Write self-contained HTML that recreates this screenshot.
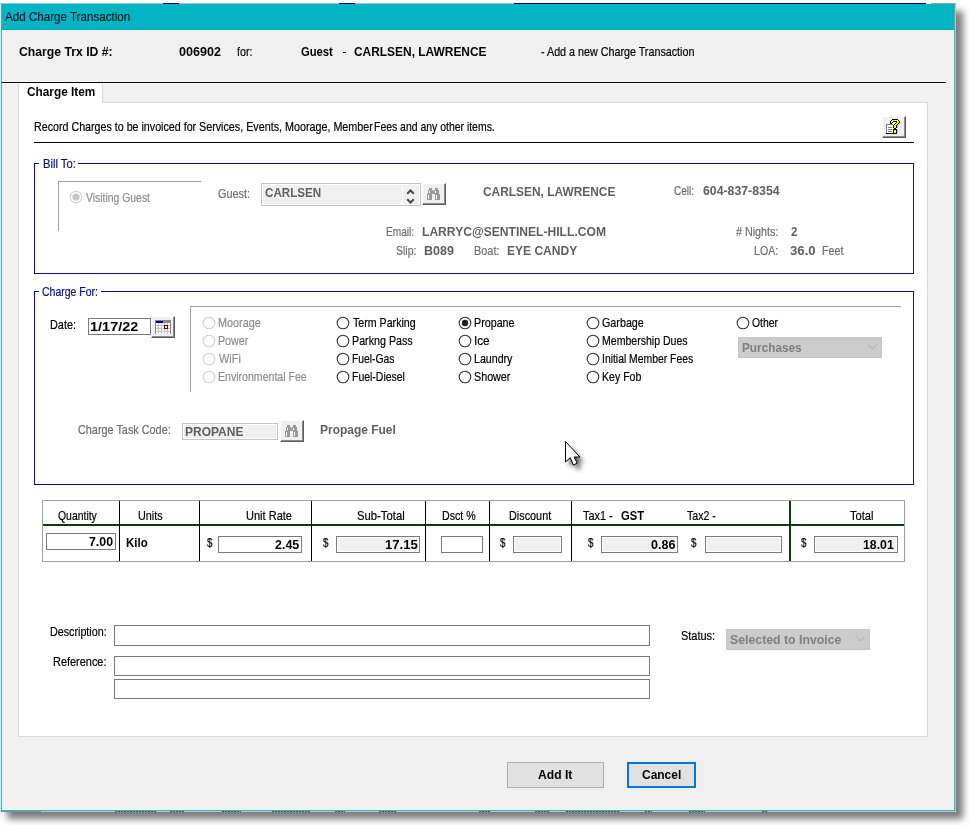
<!DOCTYPE html><html><head><meta charset="utf-8"><style>
html,body{margin:0;padding:0;width:969px;height:825px;overflow:hidden;background:#fff}
body>div,body>svg{position:absolute}
.t{font-family:"Liberation Sans",sans-serif;font-size:13px;line-height:normal;white-space:pre;transform-origin:0 0}
.n{-webkit-text-stroke:0.2px currentColor}
</style></head><body>
<div style="left:0;top:4px;width:956px;height:808px;box-shadow:7px 7px 7px rgba(0,0,0,0.52)"></div>
<div style="left:0px;top:3px;width:956px;height:1px;background:#8ccdd2"></div>
<div style="left:163px;top:3px;width:16px;height:1px;background:#000070"></div>
<div style="left:339px;top:3px;width:16px;height:1px;background:#000070"></div>
<div style="left:514px;top:3px;width:412px;height:1px;background:#000070"></div>
<div style="left:926px;top:3px;width:5px;height:1px;background:#fff"></div>
<div style="left:931px;top:3px;width:25px;height:1px;background:#a0a0a0"></div>
<div style="left:0px;top:4px;width:956px;height:808px;background:#9cd6da"></div>
<div style="left:0px;top:4px;width:1px;height:807px;background:#c4f6f7"></div>
<div style="left:1px;top:4px;width:954px;height:807px;background:#5fa2a6"></div>
<div style="left:2px;top:4px;width:952px;height:806px;background:#dffbfb"></div>
<div style="left:2px;top:4px;width:952px;height:26px;background:#03b4c4"></div>
<div style="left:2px;top:29px;width:952px;height:1px;background:#0aa4b2"></div>
<div style="left:3px;top:31px;width:950px;height:778px;background:#f0f0f0"></div>
<div style="left:343px;top:52px;width:3px;height:1px;background:#000"></div>
<div style="left:1px;top:811px;width:40px;height:1px;background:#5a9ea2"></div>
<div style="left:115px;top:811px;width:42px;height:1px;background:repeating-linear-gradient(90deg,#1e6a6e 0 2px,#7fbcc0 2px 3px)"></div>
<div style="left:170px;top:811px;width:14px;height:1px;background:repeating-linear-gradient(90deg,#1e6a6e 0 2px,#7fbcc0 2px 3px)"></div>
<div style="left:222px;top:811px;width:19px;height:1px;background:repeating-linear-gradient(90deg,#1e6a6e 0 2px,#7fbcc0 2px 3px)"></div>
<div style="left:272px;top:811px;width:38px;height:1px;background:repeating-linear-gradient(90deg,#1e6a6e 0 2px,#7fbcc0 2px 3px)"></div>
<div style="left:335px;top:811px;width:10px;height:1px;background:repeating-linear-gradient(90deg,#1e6a6e 0 2px,#7fbcc0 2px 3px)"></div>
<div style="left:379px;top:811px;width:18px;height:1px;background:repeating-linear-gradient(90deg,#1e6a6e 0 2px,#7fbcc0 2px 3px)"></div>
<div style="left:479px;top:811px;width:12px;height:1px;background:repeating-linear-gradient(90deg,#1e6a6e 0 2px,#7fbcc0 2px 3px)"></div>
<div style="left:535px;top:811px;width:15px;height:1px;background:repeating-linear-gradient(90deg,#1e6a6e 0 2px,#7fbcc0 2px 3px)"></div>
<div style="left:566px;top:811px;width:54px;height:1px;background:repeating-linear-gradient(90deg,#1e6a6e 0 2px,#7fbcc0 2px 3px)"></div>
<div style="left:645px;top:811px;width:7px;height:1px;background:repeating-linear-gradient(90deg,#1e6a6e 0 2px,#7fbcc0 2px 3px)"></div>
<div style="left:689px;top:811px;width:16px;height:1px;background:repeating-linear-gradient(90deg,#1e6a6e 0 2px,#7fbcc0 2px 3px)"></div>
<div style="left:762px;top:811px;width:6px;height:1px;background:repeating-linear-gradient(90deg,#1e6a6e 0 2px,#7fbcc0 2px 3px)"></div>
<div style="left:3px;top:81px;width:943px;height:1px;background:#ffffff"></div>
<div style="left:2px;top:82px;width:944px;height:1px;background:#000"></div>
<div style="left:3px;top:83px;width:943px;height:1px;background:#ffffff"></div>
<div style="left:18px;top:102px;width:910px;height:635px;background:#fff;border:1px solid #d9d9d9;box-sizing:border-box"></div>
<div style="left:18px;top:84px;width:85px;height:19px;background:#fff;border:1px solid #d9d9d9;border-bottom:none;border-top:none;box-sizing:border-box"></div>
<div style="left:34px;top:142px;width:880px;height:1px;background:#000"></div>
<div style="left:882px;top:116px;width:24px;height:22px;background:#f0f0f0;border-top:1px solid #fff;border-left:1px solid #fff;border-right:1px solid #5a5a5a;border-bottom:1px solid #5a5a5a;box-shadow:inset -1px -1px #8c8c8c;box-sizing:border-box"></div>
<svg style="left:886px;top:124px" width="7" height="10" viewBox="0 0 7 10" shape-rendering="crispEdges"><rect x="0" y="0" width="7" height="1" fill="#808080"/><rect x="0" y="1" width="1" height="1" fill="#808080"/><rect x="1" y="1" width="6" height="1" fill="#fff"/><rect x="0" y="2" width="1" height="1" fill="#808080"/><rect x="1" y="2" width="6" height="1" fill="#fff"/><rect x="0" y="3" width="1" height="1" fill="#808080"/><rect x="1" y="3" width="1" height="1" fill="#fff"/><rect x="2" y="3" width="4" height="1" fill="#808080"/><rect x="6" y="3" width="1" height="1" fill="#fff"/><rect x="0" y="4" width="1" height="1" fill="#808080"/><rect x="1" y="4" width="6" height="1" fill="#fff"/><rect x="0" y="5" width="1" height="1" fill="#808080"/><rect x="1" y="5" width="1" height="1" fill="#fff"/><rect x="2" y="5" width="4" height="1" fill="#808080"/><rect x="6" y="5" width="1" height="1" fill="#fff"/><rect x="0" y="6" width="1" height="1" fill="#808080"/><rect x="1" y="6" width="6" height="1" fill="#fff"/><rect x="0" y="7" width="1" height="1" fill="#808080"/><rect x="1" y="7" width="1" height="1" fill="#fff"/><rect x="2" y="7" width="4" height="1" fill="#808080"/><rect x="6" y="7" width="1" height="1" fill="#fff"/><rect x="0" y="8" width="1" height="1" fill="#808080"/><rect x="1" y="8" width="6" height="1" fill="#fff"/><rect x="0" y="9" width="7" height="1" fill="#000"/></svg>
<svg style="left:890px;top:119px" width="11" height="15" viewBox="0 0 11 15" shape-rendering="crispEdges"><rect x="2" y="0" width="6" height="1" fill="#000"/><rect x="1" y="1" width="1" height="1" fill="#000"/><rect x="2" y="1" width="6" height="1" fill="#ffff00"/><rect x="8" y="1" width="1" height="1" fill="#000"/><rect x="0" y="2" width="1" height="1" fill="#000"/><rect x="1" y="2" width="2" height="1" fill="#ffff00"/><rect x="3" y="2" width="4" height="1" fill="#000"/><rect x="7" y="2" width="2" height="1" fill="#ffff00"/><rect x="9" y="2" width="1" height="1" fill="#000"/><rect x="0" y="3" width="1" height="1" fill="#000"/><rect x="1" y="3" width="1" height="1" fill="#ffff00"/><rect x="2" y="3" width="1" height="1" fill="#000"/><rect x="6" y="3" width="1" height="1" fill="#000"/><rect x="7" y="3" width="2" height="1" fill="#ffff00"/><rect x="9" y="3" width="1" height="1" fill="#000"/><rect x="10" y="3" width="1" height="1" fill="#b8b8b8"/><rect x="0" y="4" width="2" height="1" fill="#000"/><rect x="5" y="4" width="1" height="1" fill="#000"/><rect x="6" y="4" width="2" height="1" fill="#ffff00"/><rect x="8" y="4" width="1" height="1" fill="#000"/><rect x="9" y="4" width="1" height="1" fill="#b8b8b8"/><rect x="4" y="5" width="1" height="1" fill="#000"/><rect x="5" y="5" width="2" height="1" fill="#ffff00"/><rect x="7" y="5" width="1" height="1" fill="#000"/><rect x="8" y="5" width="1" height="1" fill="#b8b8b8"/><rect x="3" y="6" width="1" height="1" fill="#000"/><rect x="4" y="6" width="2" height="1" fill="#ffff00"/><rect x="6" y="6" width="1" height="1" fill="#000"/><rect x="7" y="6" width="1" height="1" fill="#b8b8b8"/><rect x="3" y="7" width="1" height="1" fill="#000"/><rect x="4" y="7" width="2" height="1" fill="#ffff00"/><rect x="6" y="7" width="1" height="1" fill="#000"/><rect x="7" y="7" width="1" height="1" fill="#b8b8b8"/><rect x="3" y="8" width="1" height="1" fill="#000"/><rect x="4" y="8" width="2" height="1" fill="#ffff00"/><rect x="6" y="8" width="1" height="1" fill="#000"/><rect x="7" y="8" width="1" height="1" fill="#b8b8b8"/><rect x="4" y="9" width="2" height="1" fill="#000"/><rect x="3" y="10" width="4" height="1" fill="#000"/><rect x="3" y="11" width="1" height="1" fill="#000"/><rect x="4" y="11" width="2" height="1" fill="#ffff00"/><rect x="6" y="11" width="1" height="1" fill="#000"/><rect x="7" y="11" width="1" height="1" fill="#a8b8d0"/><rect x="3" y="12" width="1" height="1" fill="#000"/><rect x="4" y="12" width="2" height="1" fill="#ffff00"/><rect x="6" y="12" width="1" height="1" fill="#000"/><rect x="7" y="12" width="1" height="1" fill="#a8b8d0"/><rect x="3" y="13" width="1" height="1" fill="#000"/><rect x="4" y="13" width="2" height="1" fill="#ffff00"/><rect x="6" y="13" width="1" height="1" fill="#000"/><rect x="7" y="13" width="1" height="1" fill="#a8b8d0"/><rect x="3" y="14" width="4" height="1" fill="#000"/></svg>
<div style="left:34px;top:163px;width:880px;height:1px;background:#12127f"></div>
<div style="left:39px;top:162px;width:39px;height:3px;background:#fff"></div>
<div style="left:34px;top:163px;width:1px;height:111px;background:#12127f"></div>
<div style="left:913px;top:163px;width:1px;height:111px;background:#12127f"></div>
<div style="left:34px;top:273px;width:880px;height:1px;background:#12127f"></div>
<div style="left:34px;top:291px;width:880px;height:1px;background:#12127f"></div>
<div style="left:39px;top:290px;width:62px;height:3px;background:#fff"></div>
<div style="left:34px;top:291px;width:1px;height:194px;background:#12127f"></div>
<div style="left:913px;top:291px;width:1px;height:194px;background:#12127f"></div>
<div style="left:34px;top:484px;width:880px;height:1px;background:#12127f"></div>
<div style="left:58px;top:181px;width:143px;height:1px;background:#a0a0a0"></div>
<div style="left:58px;top:181px;width:1px;height:50px;background:#a0a0a0"></div>
<div style="left:190px;top:306px;width:711px;height:1px;background:#a0a0a0"></div>
<div style="left:190px;top:306px;width:1px;height:86px;background:#a0a0a0"></div>
<div style="left:261px;top:183px;width:160px;height:23px;background:#f0f0f0;box-shadow:inset 1px 1px #fff,inset -1px -1px #fff;border:1px solid #c4c4c4;box-sizing:border-box"></div>
<div style="left:402px;top:184px;width:1px;height:21px;background:#fff"></div>
<svg style="left:405px;top:187px" width="11" height="18" viewBox="0 0 11 18"><path d="M2.2 6.8 L5.5 3.5 L8.8 6.8" fill="none" stroke="#4a4a4a" stroke-width="2"/><path d="M2.2 12.2 L5.5 15.5 L8.8 12.2" fill="none" stroke="#4a4a4a" stroke-width="2"/></svg>
<div style="left:422px;top:183px;width:24px;height:22px;background:#f0f0f0;border-top:1px solid #fff;border-left:1px solid #fff;border-right:1px solid #5a5a5a;border-bottom:1px solid #5a5a5a;box-shadow:inset -1px -1px #8c8c8c;box-sizing:border-box"></div>
<svg style="left:427px;top:188px" width="13" height="12" viewBox="0 0 13 12" shape-rendering="crispEdges"><rect x="2" y="0" width="3" height="1" fill="#999999"/><rect x="8" y="0" width="3" height="1" fill="#999999"/><rect x="2" y="1" width="3" height="1" fill="#999999"/><rect x="8" y="1" width="3" height="1" fill="#999999"/><rect x="1" y="2" width="5" height="1" fill="#999999"/><rect x="7" y="2" width="5" height="1" fill="#999999"/><rect x="1" y="3" width="1" height="1" fill="#999999"/><rect x="2" y="3" width="1" height="1" fill="#ffffff"/><rect x="3" y="3" width="5" height="1" fill="#999999"/><rect x="8" y="3" width="1" height="1" fill="#ffffff"/><rect x="9" y="3" width="3" height="1" fill="#999999"/><rect x="1" y="4" width="1" height="1" fill="#999999"/><rect x="2" y="4" width="1" height="1" fill="#ffffff"/><rect x="3" y="4" width="5" height="1" fill="#999999"/><rect x="8" y="4" width="1" height="1" fill="#ffffff"/><rect x="9" y="4" width="3" height="1" fill="#999999"/><rect x="1" y="5" width="11" height="1" fill="#999999"/><rect x="0" y="6" width="5" height="1" fill="#999999"/><rect x="8" y="6" width="5" height="1" fill="#999999"/><rect x="0" y="7" width="1" height="1" fill="#999999"/><rect x="1" y="7" width="1" height="1" fill="#ffffff"/><rect x="2" y="7" width="3" height="1" fill="#999999"/><rect x="8" y="7" width="1" height="1" fill="#999999"/><rect x="9" y="7" width="1" height="1" fill="#ffffff"/><rect x="10" y="7" width="3" height="1" fill="#999999"/><rect x="0" y="8" width="1" height="1" fill="#999999"/><rect x="1" y="8" width="1" height="1" fill="#ffffff"/><rect x="2" y="8" width="3" height="1" fill="#999999"/><rect x="8" y="8" width="1" height="1" fill="#999999"/><rect x="9" y="8" width="1" height="1" fill="#ffffff"/><rect x="10" y="8" width="3" height="1" fill="#999999"/><rect x="0" y="9" width="1" height="1" fill="#999999"/><rect x="1" y="9" width="1" height="1" fill="#ffffff"/><rect x="2" y="9" width="3" height="1" fill="#999999"/><rect x="8" y="9" width="1" height="1" fill="#999999"/><rect x="9" y="9" width="1" height="1" fill="#ffffff"/><rect x="10" y="9" width="3" height="1" fill="#999999"/><rect x="0" y="10" width="1" height="1" fill="#999999"/><rect x="1" y="10" width="1" height="1" fill="#ffffff"/><rect x="2" y="10" width="3" height="1" fill="#999999"/><rect x="8" y="10" width="1" height="1" fill="#999999"/><rect x="9" y="10" width="1" height="1" fill="#ffffff"/><rect x="10" y="10" width="3" height="1" fill="#999999"/><rect x="0" y="11" width="5" height="1" fill="#999999"/><rect x="8" y="11" width="5" height="1" fill="#999999"/></svg>
<div style="left:88px;top:318px;width:63px;height:17px;background:#fff;border:1px solid #7a7a7a;box-sizing:border-box"></div>
<div style="left:151px;top:316px;width:24px;height:22px;background:#f0f0f0;border-top:1px solid #fff;border-left:1px solid #fff;border-right:1px solid #5a5a5a;border-bottom:1px solid #5a5a5a;box-shadow:inset -1px -1px #8c8c8c;box-sizing:border-box"></div>
<svg style="left:155px;top:320px" width="16" height="14" viewBox="0 0 16 14" shape-rendering="crispEdges"><rect x="0" y="0" width="16" height="1" fill="#8a8a8a"/><rect x="0" y="1" width="1" height="1" fill="#8a8a8a"/><rect x="1" y="1" width="7" height="1" fill="#000070"/><rect x="8" y="1" width="7" height="1" fill="#8a8a8a"/><rect x="15" y="1" width="1" height="1" fill="#8a8a8a"/><rect x="0" y="2" width="1" height="1" fill="#8a8a8a"/><rect x="1" y="2" width="7" height="1" fill="#000070"/><rect x="8" y="2" width="7" height="1" fill="#8a8a8a"/><rect x="15" y="2" width="1" height="1" fill="#8a8a8a"/><rect x="0" y="3" width="1" height="1" fill="#8a8a8a"/><rect x="1" y="3" width="2" height="1" fill="#ffffff"/><rect x="3" y="3" width="1" height="1" fill="#c4c4c4"/><rect x="4" y="3" width="2" height="1" fill="#ffffff"/><rect x="6" y="3" width="1" height="1" fill="#c4c4c4"/><rect x="7" y="3" width="2" height="1" fill="#ffffff"/><rect x="9" y="3" width="1" height="1" fill="#c4c4c4"/><rect x="10" y="3" width="2" height="1" fill="#ffffff"/><rect x="12" y="3" width="1" height="1" fill="#c4c4c4"/><rect x="13" y="3" width="2" height="1" fill="#ffffff"/><rect x="15" y="3" width="1" height="1" fill="#8a8a8a"/><rect x="0" y="4" width="1" height="1" fill="#8a8a8a"/><rect x="1" y="4" width="2" height="1" fill="#ffffff"/><rect x="3" y="4" width="1" height="1" fill="#c4c4c4"/><rect x="4" y="4" width="2" height="1" fill="#ffffff"/><rect x="6" y="4" width="1" height="1" fill="#c4c4c4"/><rect x="7" y="4" width="2" height="1" fill="#ffffff"/><rect x="9" y="4" width="1" height="1" fill="#c4c4c4"/><rect x="10" y="4" width="2" height="1" fill="#ffffff"/><rect x="12" y="4" width="1" height="1" fill="#c4c4c4"/><rect x="13" y="4" width="2" height="1" fill="#ffffff"/><rect x="15" y="4" width="1" height="1" fill="#8a8a8a"/><rect x="0" y="5" width="1" height="1" fill="#8a8a8a"/><rect x="1" y="5" width="8" height="1" fill="#c4c4c4"/><rect x="9" y="5" width="4" height="1" fill="#700000"/><rect x="13" y="5" width="2" height="1" fill="#c4c4c4"/><rect x="15" y="5" width="1" height="1" fill="#8a8a8a"/><rect x="0" y="6" width="1" height="1" fill="#8a8a8a"/><rect x="1" y="6" width="2" height="1" fill="#ffffff"/><rect x="3" y="6" width="1" height="1" fill="#c4c4c4"/><rect x="4" y="6" width="2" height="1" fill="#ffffff"/><rect x="6" y="6" width="1" height="1" fill="#c4c4c4"/><rect x="7" y="6" width="2" height="1" fill="#ffffff"/><rect x="9" y="6" width="1" height="1" fill="#700000"/><rect x="10" y="6" width="2" height="1" fill="#ffffff"/><rect x="12" y="6" width="1" height="1" fill="#700000"/><rect x="13" y="6" width="2" height="1" fill="#ffffff"/><rect x="15" y="6" width="1" height="1" fill="#8a8a8a"/><rect x="0" y="7" width="1" height="1" fill="#8a8a8a"/><rect x="1" y="7" width="2" height="1" fill="#ffffff"/><rect x="3" y="7" width="1" height="1" fill="#c4c4c4"/><rect x="4" y="7" width="2" height="1" fill="#ffffff"/><rect x="6" y="7" width="1" height="1" fill="#c4c4c4"/><rect x="7" y="7" width="2" height="1" fill="#ffffff"/><rect x="9" y="7" width="1" height="1" fill="#700000"/><rect x="10" y="7" width="2" height="1" fill="#ffffff"/><rect x="12" y="7" width="1" height="1" fill="#700000"/><rect x="13" y="7" width="2" height="1" fill="#ffffff"/><rect x="15" y="7" width="1" height="1" fill="#8a8a8a"/><rect x="0" y="8" width="1" height="1" fill="#8a8a8a"/><rect x="1" y="8" width="8" height="1" fill="#c4c4c4"/><rect x="9" y="8" width="4" height="1" fill="#700000"/><rect x="13" y="8" width="2" height="1" fill="#c4c4c4"/><rect x="15" y="8" width="1" height="1" fill="#8a8a8a"/><rect x="0" y="9" width="1" height="1" fill="#8a8a8a"/><rect x="1" y="9" width="2" height="1" fill="#ffffff"/><rect x="3" y="9" width="1" height="1" fill="#c4c4c4"/><rect x="4" y="9" width="2" height="1" fill="#ffffff"/><rect x="6" y="9" width="1" height="1" fill="#c4c4c4"/><rect x="7" y="9" width="2" height="1" fill="#ffffff"/><rect x="9" y="9" width="1" height="1" fill="#c4c4c4"/><rect x="10" y="9" width="2" height="1" fill="#ffffff"/><rect x="12" y="9" width="1" height="1" fill="#c4c4c4"/><rect x="13" y="9" width="2" height="1" fill="#ffffff"/><rect x="15" y="9" width="1" height="1" fill="#8a8a8a"/><rect x="0" y="10" width="1" height="1" fill="#8a8a8a"/><rect x="1" y="10" width="2" height="1" fill="#ffffff"/><rect x="3" y="10" width="1" height="1" fill="#c4c4c4"/><rect x="4" y="10" width="2" height="1" fill="#ffffff"/><rect x="6" y="10" width="1" height="1" fill="#c4c4c4"/><rect x="7" y="10" width="2" height="1" fill="#ffffff"/><rect x="9" y="10" width="1" height="1" fill="#c4c4c4"/><rect x="10" y="10" width="2" height="1" fill="#ffffff"/><rect x="12" y="10" width="1" height="1" fill="#c4c4c4"/><rect x="13" y="10" width="2" height="1" fill="#ffffff"/><rect x="15" y="10" width="1" height="1" fill="#8a8a8a"/><rect x="0" y="11" width="1" height="1" fill="#8a8a8a"/><rect x="1" y="11" width="14" height="1" fill="#c4c4c4"/><rect x="15" y="11" width="1" height="1" fill="#8a8a8a"/><rect x="0" y="12" width="1" height="1" fill="#8a8a8a"/><rect x="1" y="12" width="2" height="1" fill="#ffffff"/><rect x="3" y="12" width="1" height="1" fill="#c4c4c4"/><rect x="4" y="12" width="2" height="1" fill="#ffffff"/><rect x="6" y="12" width="1" height="1" fill="#c4c4c4"/><rect x="7" y="12" width="2" height="1" fill="#ffffff"/><rect x="9" y="12" width="1" height="1" fill="#c4c4c4"/><rect x="10" y="12" width="2" height="1" fill="#ffffff"/><rect x="12" y="12" width="1" height="1" fill="#c4c4c4"/><rect x="13" y="12" width="2" height="1" fill="#ffffff"/><rect x="15" y="12" width="1" height="1" fill="#8a8a8a"/><rect x="0" y="13" width="1" height="1" fill="#8a8a8a"/><rect x="1" y="13" width="2" height="1" fill="#ffffff"/><rect x="3" y="13" width="1" height="1" fill="#c4c4c4"/><rect x="4" y="13" width="2" height="1" fill="#ffffff"/><rect x="6" y="13" width="1" height="1" fill="#c4c4c4"/><rect x="7" y="13" width="2" height="1" fill="#ffffff"/><rect x="9" y="13" width="1" height="1" fill="#c4c4c4"/><rect x="10" y="13" width="2" height="1" fill="#ffffff"/><rect x="12" y="13" width="1" height="1" fill="#c4c4c4"/><rect x="13" y="13" width="2" height="1" fill="#ffffff"/><rect x="15" y="13" width="1" height="1" fill="#8a8a8a"/></svg>
<svg style="left:69.3px;top:190.1px" width="14" height="14" viewBox="0 0 14 14"><circle cx="7" cy="7" r="5.8" fill="#fff" stroke="#cfcfcf" stroke-width="1.1"/><circle cx="7" cy="7" r="3.6" fill="#c8c8c8"/></svg>
<svg style="left:201.5px;top:315.5px" width="14" height="14" viewBox="0 0 14 14"><circle cx="7" cy="7" r="5.8" fill="#fff" stroke="#cfcfcf" stroke-width="1.1"/></svg>
<svg style="left:335.5px;top:315.5px" width="14" height="14" viewBox="0 0 14 14"><circle cx="7" cy="7" r="5.8" fill="#fff" stroke="#333" stroke-width="1.1"/></svg>
<svg style="left:457.5px;top:315.5px" width="14" height="14" viewBox="0 0 14 14"><circle cx="7" cy="7" r="5.8" fill="#fff" stroke="#333" stroke-width="1.1"/><circle cx="7" cy="7" r="3.2" fill="#222"/></svg>
<svg style="left:585.5px;top:315.5px" width="14" height="14" viewBox="0 0 14 14"><circle cx="7" cy="7" r="5.8" fill="#fff" stroke="#333" stroke-width="1.1"/></svg>
<svg style="left:201.5px;top:333.5px" width="14" height="14" viewBox="0 0 14 14"><circle cx="7" cy="7" r="5.8" fill="#fff" stroke="#cfcfcf" stroke-width="1.1"/></svg>
<svg style="left:335.5px;top:333.5px" width="14" height="14" viewBox="0 0 14 14"><circle cx="7" cy="7" r="5.8" fill="#fff" stroke="#333" stroke-width="1.1"/></svg>
<svg style="left:457.5px;top:333.5px" width="14" height="14" viewBox="0 0 14 14"><circle cx="7" cy="7" r="5.8" fill="#fff" stroke="#333" stroke-width="1.1"/></svg>
<svg style="left:585.5px;top:333.5px" width="14" height="14" viewBox="0 0 14 14"><circle cx="7" cy="7" r="5.8" fill="#fff" stroke="#333" stroke-width="1.1"/></svg>
<svg style="left:201.5px;top:351.5px" width="14" height="14" viewBox="0 0 14 14"><circle cx="7" cy="7" r="5.8" fill="#fff" stroke="#cfcfcf" stroke-width="1.1"/></svg>
<svg style="left:335.5px;top:351.5px" width="14" height="14" viewBox="0 0 14 14"><circle cx="7" cy="7" r="5.8" fill="#fff" stroke="#333" stroke-width="1.1"/></svg>
<svg style="left:457.5px;top:351.5px" width="14" height="14" viewBox="0 0 14 14"><circle cx="7" cy="7" r="5.8" fill="#fff" stroke="#333" stroke-width="1.1"/></svg>
<svg style="left:585.5px;top:351.5px" width="14" height="14" viewBox="0 0 14 14"><circle cx="7" cy="7" r="5.8" fill="#fff" stroke="#333" stroke-width="1.1"/></svg>
<svg style="left:201.5px;top:369.5px" width="14" height="14" viewBox="0 0 14 14"><circle cx="7" cy="7" r="5.8" fill="#fff" stroke="#cfcfcf" stroke-width="1.1"/></svg>
<svg style="left:335.5px;top:369.5px" width="14" height="14" viewBox="0 0 14 14"><circle cx="7" cy="7" r="5.8" fill="#fff" stroke="#333" stroke-width="1.1"/></svg>
<svg style="left:457.5px;top:369.5px" width="14" height="14" viewBox="0 0 14 14"><circle cx="7" cy="7" r="5.8" fill="#fff" stroke="#333" stroke-width="1.1"/></svg>
<svg style="left:585.5px;top:369.5px" width="14" height="14" viewBox="0 0 14 14"><circle cx="7" cy="7" r="5.8" fill="#fff" stroke="#333" stroke-width="1.1"/></svg>
<svg style="left:735.5px;top:315.5px" width="14" height="14" viewBox="0 0 14 14"><circle cx="7" cy="7" r="5.8" fill="#fff" stroke="#333" stroke-width="1.1"/></svg>
<div style="left:738px;top:337px;width:144px;height:21px;background:#cccccc;border:1px solid #c4c4c4;box-sizing:border-box"></div>
<svg style="left:867px;top:343px" width="11" height="8" viewBox="0 0 11 8"><path d="M1 1.5 L5.5 6 L10 1.5" fill="none" stroke="#a8a8a8" stroke-width="1"/></svg>
<div style="left:182px;top:423px;width:96px;height:17px;background:#f0f0f0;box-shadow:inset 1px 1px #fff,inset -1px -1px #fff;border:1px solid #c4c4c4;box-sizing:border-box"></div>
<div style="left:280px;top:420px;width:24px;height:22px;background:#f0f0f0;border-top:1px solid #fff;border-left:1px solid #fff;border-right:1px solid #5a5a5a;border-bottom:1px solid #5a5a5a;box-shadow:inset -1px -1px #8c8c8c;box-sizing:border-box"></div>
<svg style="left:285px;top:425px" width="13" height="12" viewBox="0 0 13 12" shape-rendering="crispEdges"><rect x="2" y="0" width="3" height="1" fill="#999999"/><rect x="8" y="0" width="3" height="1" fill="#999999"/><rect x="2" y="1" width="3" height="1" fill="#999999"/><rect x="8" y="1" width="3" height="1" fill="#999999"/><rect x="1" y="2" width="5" height="1" fill="#999999"/><rect x="7" y="2" width="5" height="1" fill="#999999"/><rect x="1" y="3" width="1" height="1" fill="#999999"/><rect x="2" y="3" width="1" height="1" fill="#ffffff"/><rect x="3" y="3" width="5" height="1" fill="#999999"/><rect x="8" y="3" width="1" height="1" fill="#ffffff"/><rect x="9" y="3" width="3" height="1" fill="#999999"/><rect x="1" y="4" width="1" height="1" fill="#999999"/><rect x="2" y="4" width="1" height="1" fill="#ffffff"/><rect x="3" y="4" width="5" height="1" fill="#999999"/><rect x="8" y="4" width="1" height="1" fill="#ffffff"/><rect x="9" y="4" width="3" height="1" fill="#999999"/><rect x="1" y="5" width="11" height="1" fill="#999999"/><rect x="0" y="6" width="5" height="1" fill="#999999"/><rect x="8" y="6" width="5" height="1" fill="#999999"/><rect x="0" y="7" width="1" height="1" fill="#999999"/><rect x="1" y="7" width="1" height="1" fill="#ffffff"/><rect x="2" y="7" width="3" height="1" fill="#999999"/><rect x="8" y="7" width="1" height="1" fill="#999999"/><rect x="9" y="7" width="1" height="1" fill="#ffffff"/><rect x="10" y="7" width="3" height="1" fill="#999999"/><rect x="0" y="8" width="1" height="1" fill="#999999"/><rect x="1" y="8" width="1" height="1" fill="#ffffff"/><rect x="2" y="8" width="3" height="1" fill="#999999"/><rect x="8" y="8" width="1" height="1" fill="#999999"/><rect x="9" y="8" width="1" height="1" fill="#ffffff"/><rect x="10" y="8" width="3" height="1" fill="#999999"/><rect x="0" y="9" width="1" height="1" fill="#999999"/><rect x="1" y="9" width="1" height="1" fill="#ffffff"/><rect x="2" y="9" width="3" height="1" fill="#999999"/><rect x="8" y="9" width="1" height="1" fill="#999999"/><rect x="9" y="9" width="1" height="1" fill="#ffffff"/><rect x="10" y="9" width="3" height="1" fill="#999999"/><rect x="0" y="10" width="1" height="1" fill="#999999"/><rect x="1" y="10" width="1" height="1" fill="#ffffff"/><rect x="2" y="10" width="3" height="1" fill="#999999"/><rect x="8" y="10" width="1" height="1" fill="#999999"/><rect x="9" y="10" width="1" height="1" fill="#ffffff"/><rect x="10" y="10" width="3" height="1" fill="#999999"/><rect x="0" y="11" width="5" height="1" fill="#999999"/><rect x="8" y="11" width="5" height="1" fill="#999999"/></svg>
<div style="left:42px;top:500px;width:863px;height:62px;background:#fff;border:1px solid #a0a0a0;box-sizing:border-box"></div>
<div style="left:43px;top:524px;width:861px;height:2px;background:#0f3a0f"></div>
<div style="left:119px;top:501px;width:1px;height:60px;background:#000"></div>
<div style="left:199px;top:501px;width:1px;height:60px;background:#000"></div>
<div style="left:311px;top:501px;width:1px;height:60px;background:#000"></div>
<div style="left:425px;top:501px;width:1px;height:60px;background:#000"></div>
<div style="left:489px;top:501px;width:1px;height:60px;background:#000"></div>
<div style="left:571px;top:501px;width:1px;height:60px;background:#000"></div>
<div style="left:789px;top:501px;width:2px;height:60px;background:#0f3a0f"></div>
<div style="left:46px;top:533px;width:70px;height:17px;background:#fff;border:1px solid #7a7a7a;box-sizing:border-box"></div>
<div style="left:218px;top:536px;width:84px;height:17px;background:#fff;border:1px solid #7a7a7a;box-sizing:border-box"></div>
<div style="left:336px;top:536px;width:84px;height:17px;background:#f0f0f0;box-shadow:inset 1px 1px #fff,inset -1px -1px #fff;border:1px solid #7a7a7a;box-sizing:border-box"></div>
<div style="left:441px;top:536px;width:42px;height:17px;background:#fff;border:1px solid #7a7a7a;box-sizing:border-box"></div>
<div style="left:513px;top:536px;width:49px;height:17px;background:#f0f0f0;box-shadow:inset 1px 1px #fff,inset -1px -1px #fff;border:1px solid #7a7a7a;box-sizing:border-box"></div>
<div style="left:601px;top:536px;width:77px;height:17px;background:#f0f0f0;box-shadow:inset 1px 1px #fff,inset -1px -1px #fff;border:1px solid #7a7a7a;box-sizing:border-box"></div>
<div style="left:705px;top:536px;width:77px;height:17px;background:#f0f0f0;box-shadow:inset 1px 1px #fff,inset -1px -1px #fff;border:1px solid #7a7a7a;box-sizing:border-box"></div>
<div style="left:814px;top:536px;width:84px;height:17px;background:#f0f0f0;box-shadow:inset 1px 1px #fff,inset -1px -1px #fff;border:1px solid #7a7a7a;box-sizing:border-box"></div>
<div style="left:114px;top:625px;width:536px;height:21px;background:#fff;border:1px solid #7a7a7a;box-sizing:border-box"></div>
<div style="left:114px;top:656px;width:536px;height:20px;background:#fff;border:1px solid #7a7a7a;box-sizing:border-box"></div>
<div style="left:114px;top:679px;width:536px;height:20px;background:#fff;border:1px solid #7a7a7a;box-sizing:border-box"></div>
<div style="left:726px;top:629px;width:144px;height:21px;background:#cccccc;border:1px solid #c4c4c4;box-sizing:border-box"></div>
<svg style="left:855px;top:635px" width="11" height="8" viewBox="0 0 11 8"><path d="M1 1.5 L5.5 6 L10 1.5" fill="none" stroke="#a8a8a8" stroke-width="1"/></svg>
<div style="left:507px;top:762px;width:97px;height:26px;background:#e1e1e1;border:1px solid #adadad;box-sizing:border-box"></div>
<div style="left:627px;top:762px;width:69px;height:26px;background:#e1e1e1;border:2px solid #0078d7;box-sizing:border-box"></div>
<svg style="left:560px;top:437px" width="34" height="38" viewBox="0 0 34 38">
<defs><filter id="sh" x="-50%" y="-50%" width="200%" height="200%"><feGaussianBlur stdDeviation="2.8"/></filter></defs>
<path d="M9.5 9.5 V30 L14.3 25.7 L17.3 33.1 L21.1 31.1 L18.1 25 H23.9 Z" fill="#000" opacity="0.65" filter="url(#sh)"/>
<path d="M5.5 4.5 V25 L10.3 20.7 L13.3 28.1 L17.1 26.1 L14.1 20 H19.9 Z" fill="#fff" stroke="#000" stroke-width="1" stroke-linejoin="miter"/>
</svg>
<div class="t n" style="left:5.00px;top:9px;font-weight:normal;color:#0a1a20;transform:scaleX(0.8929)">Add Charge Transaction</div>
<div class="t" style="left:19.00px;top:44px;font-weight:bold;color:#000;transform:scaleX(0.9394)">Charge Trx ID #:</div>
<div class="t" style="left:178.50px;top:44px;font-weight:bold;color:#000;transform:scaleX(0.9651)">006902</div>
<div class="t n" style="left:237.20px;top:44px;font-weight:normal;color:#000;transform:scaleX(0.8222)">for:</div>
<div class="t" style="left:301.00px;top:44px;font-weight:bold;color:#000;transform:scaleX(0.8649)">Guest</div>
<div class="t" style="left:353.80px;top:44px;font-weight:bold;color:#000;transform:scaleX(0.9174)">CARLSEN, LAWRENCE</div>
<div class="t n" style="left:541.17px;top:44px;font-weight:normal;color:#000;transform:scaleX(0.8261)">- Add a new Charge Transaction</div>
<div class="t" style="left:27.00px;top:84px;font-weight:bold;color:#000;transform:scaleX(0.9095)">Charge Item</div>
<div class="t n" style="left:33.78px;top:119px;font-weight:normal;color:#000;transform:scaleX(0.8219)">Record Charges to be invoiced for</div>
<div class="t n" style="left:198.57px;top:119px;font-weight:normal;color:#000;transform:scaleX(0.8268)">Services, Events, Moorage, Member</div>
<div class="t n" style="left:373.90px;top:119px;font-weight:normal;color:#000;transform:scaleX(0.8034)">Fees and any other items.</div>
<div class="t n" style="left:42.54px;top:156px;font-weight:normal;color:#10107c;transform:scaleX(0.8611)">Bill To:</div>
<div class="t n" style="left:86.00px;top:190px;font-weight:normal;color:#8d8d8d;transform:scaleX(0.8000)">Visiting Guest</div>
<div class="t n" style="left:217.66px;top:186px;font-weight:normal;color:#6d6d6d;transform:scaleX(0.8389)">Guest:</div>
<div class="t" style="left:265.00px;top:185px;font-weight:bold;color:#5f5f5f;transform:scaleX(0.8935)">CARLSEN</div>
<div class="t" style="left:483.00px;top:184px;font-weight:bold;color:#5f5f5f;transform:scaleX(0.9167)">CARLSEN, LAWRENCE</div>
<div class="t n" style="left:674.03px;top:183px;font-weight:normal;color:#6d6d6d;transform:scaleX(0.7709)">Cell:</div>
<div class="t" style="left:703.00px;top:183px;font-weight:bold;color:#5f5f5f;transform:scaleX(0.9457)">604-837-8354</div>
<div class="t n" style="left:385.89px;top:224px;font-weight:normal;color:#6d6d6d;transform:scaleX(0.7780)">Email:</div>
<div class="t" style="left:421.63px;top:224px;font-weight:bold;color:#5f5f5f;transform:scaleX(0.9300)">LARRYC@SENTINEL-HILL.COM</div>
<div class="t n" style="left:395.99px;top:243px;font-weight:normal;color:#6d6d6d;transform:scaleX(0.8087)">Slip:</div>
<div class="t" style="left:423.64px;top:243px;font-weight:bold;color:#5f5f5f;transform:scaleX(0.9633)">B089</div>
<div class="t n" style="left:473.96px;top:243px;font-weight:normal;color:#6d6d6d;transform:scaleX(0.8393)">Boat:</div>
<div class="t" style="left:506.57px;top:243px;font-weight:bold;color:#5f5f5f;transform:scaleX(0.9253)">EYE CANDY</div>
<div class="t n" style="left:736.10px;top:224px;font-weight:normal;color:#6d6d6d;transform:scaleX(0.8260)"># Nights:</div>
<div class="t" style="left:790.80px;top:224px;font-weight:bold;color:#5f5f5f;transform:scaleX(0.8857)">2</div>
<div class="t n" style="left:753.65px;top:243px;font-weight:normal;color:#6d6d6d;transform:scaleX(0.8155)">LOA:</div>
<div class="t" style="left:789.75px;top:243px;font-weight:bold;color:#5f5f5f;transform:scaleX(1.0117)">36.0</div>
<div class="t n" style="left:821.74px;top:243px;font-weight:normal;color:#6d6d6d;transform:scaleX(0.8253)">Feet</div>
<div class="t n" style="left:42.36px;top:284px;font-weight:normal;color:#10107c;transform:scaleX(0.8062)">Charge For:</div>
<div class="t n" style="left:49.76px;top:317px;font-weight:normal;color:#000;transform:scaleX(0.8379)">Date:</div>
<div class="t" style="left:90.29px;top:319px;font-weight:bold;color:#000;transform:scaleX(1.1143)">1/17/22</div>
<div class="t n" style="left:217.67px;top:315px;font-weight:normal;color:#8d8d8d;transform:scaleX(0.8320)">Moorage</div>
<div class="t n" style="left:217.68px;top:333px;font-weight:normal;color:#8d8d8d;transform:scaleX(0.8194)">Power</div>
<div class="t n" style="left:218.50px;top:351px;font-weight:normal;color:#8d8d8d;transform:scaleX(0.8400)">WiFi</div>
<div class="t n" style="left:217.69px;top:369px;font-weight:normal;color:#8d8d8d;transform:scaleX(0.8130)">Environmental Fee</div>
<div class="t n" style="left:353.00px;top:315px;font-weight:normal;color:#000;transform:scaleX(0.8184)">Term Parking</div>
<div class="t n" style="left:352.18px;top:333px;font-weight:normal;color:#000;transform:scaleX(0.8236)">Parkng Pass</div>
<div class="t n" style="left:352.21px;top:351px;font-weight:normal;color:#000;transform:scaleX(0.7942)">Fuel-Gas</div>
<div class="t n" style="left:352.20px;top:369px;font-weight:normal;color:#000;transform:scaleX(0.8047)">Fuel-Diesel</div>
<div class="t n" style="left:473.88px;top:315px;font-weight:normal;color:#000;transform:scaleX(0.8250)">Propane</div>
<div class="t n" style="left:473.80px;top:333px;font-weight:normal;color:#000;transform:scaleX(0.9000)">Ice</div>
<div class="t n" style="left:473.88px;top:351px;font-weight:normal;color:#000;transform:scaleX(0.8174)">Laundry</div>
<div class="t n" style="left:473.87px;top:369px;font-weight:normal;color:#000;transform:scaleX(0.8256)">Shower</div>
<div class="t n" style="left:601.87px;top:315px;font-weight:normal;color:#000;transform:scaleX(0.8265)">Garbage</div>
<div class="t n" style="left:601.89px;top:333px;font-weight:normal;color:#000;transform:scaleX(0.8115)">Membership Dues</div>
<div class="t n" style="left:601.90px;top:351px;font-weight:normal;color:#000;transform:scaleX(0.7982)">Initial Member Fees</div>
<div class="t n" style="left:601.89px;top:369px;font-weight:normal;color:#000;transform:scaleX(0.8128)">Key Fob</div>
<div class="t n" style="left:751.70px;top:315px;font-weight:normal;color:#000;transform:scaleX(0.8000)">Other</div>
<div class="t" style="left:741.89px;top:340px;font-weight:bold;color:#7e7e7e;transform:scaleX(0.9062)">Purchases</div>
<div class="t n" style="left:77.57px;top:422px;font-weight:normal;color:#6d6d6d;transform:scaleX(0.8349)">Charge Task Code:</div>
<div class="t" style="left:185.08px;top:424px;font-weight:bold;color:#5f5f5f;transform:scaleX(0.9226)">PROPANE</div>
<div class="t" style="left:319.74px;top:422px;font-weight:bold;color:#5f5f5f;transform:scaleX(0.9196)">Propage Fuel</div>
<div class="t n" style="left:57.90px;top:508px;font-weight:normal;color:#000;transform:scaleX(0.8021)">Quantity</div>
<div class="t n" style="left:137.87px;top:508px;font-weight:normal;color:#000;transform:scaleX(0.8321)">Units</div>
<div class="t n" style="left:245.65px;top:508px;font-weight:normal;color:#000;transform:scaleX(0.8491)">Unit Rate</div>
<div class="t n" style="left:357.43px;top:508px;font-weight:normal;color:#000;transform:scaleX(0.8679)">Sub-Total</div>
<div class="t n" style="left:441.78px;top:508px;font-weight:normal;color:#000;transform:scaleX(0.8175)">Dsct %</div>
<div class="t n" style="left:509.37px;top:508px;font-weight:normal;color:#000;transform:scaleX(0.8340)">Discount</div>
<div class="t n" style="left:583.00px;top:508px;font-weight:normal;color:#000;transform:scaleX(0.8371)">Tax1 -</div>
<div class="t n" style="left:687.30px;top:508px;font-weight:normal;color:#000;transform:scaleX(0.8143)">Tax2 -</div>
<div class="t n" style="left:850.20px;top:508px;font-weight:normal;color:#000;transform:scaleX(0.8556)">Total</div>
<div class="t" style="left:620.60px;top:508px;font-weight:bold;color:#000;transform:scaleX(0.8630)">GST</div>
<div class="t" style="left:89.20px;top:534px;font-weight:bold;color:#000;transform:scaleX(0.9480)">7.00</div>
<div class="t" style="left:125.88px;top:535px;font-weight:bold;color:#000;transform:scaleX(0.8829)">Kilo</div>
<div class="t n" style="left:206.80px;top:535px;font-weight:normal;color:#000;transform:scaleX(0.7555)">$</div>
<div class="t n" style="left:322.60px;top:535px;font-weight:normal;color:#000;transform:scaleX(0.7555)">$</div>
<div class="t n" style="left:500.20px;top:535px;font-weight:normal;color:#000;transform:scaleX(0.7555)">$</div>
<div class="t n" style="left:587.60px;top:535px;font-weight:normal;color:#000;transform:scaleX(0.7555)">$</div>
<div class="t n" style="left:691.40px;top:535px;font-weight:normal;color:#000;transform:scaleX(0.7555)">$</div>
<div class="t n" style="left:800.50px;top:535px;font-weight:normal;color:#000;transform:scaleX(0.7555)">$</div>
<div class="t" style="left:275.00px;top:537px;font-weight:bold;color:#000;transform:scaleX(0.9600)">2.45</div>
<div class="t" style="left:384.99px;top:537px;font-weight:bold;color:#000;transform:scaleX(1.0065)">17.15</div>
<div class="t" style="left:651.00px;top:537px;font-weight:bold;color:#000;transform:scaleX(0.9640)">0.86</div>
<div class="t" style="left:863.05px;top:537px;font-weight:bold;color:#000;transform:scaleX(0.9452)">18.01</div>
<div class="t n" style="left:49.84px;top:624px;font-weight:normal;color:#000;transform:scaleX(0.8248)">Description:</div>
<div class="t n" style="left:53.13px;top:654px;font-weight:normal;color:#000;transform:scaleX(0.8409)">Reference:</div>
<div class="t n" style="left:680.59px;top:628px;font-weight:normal;color:#000;transform:scaleX(0.8438)">Status:</div>
<div class="t" style="left:729.79px;top:632px;font-weight:bold;color:#7e7e7e;transform:scaleX(0.9458)">Selected to Invoice</div>
<div class="t" style="left:538.20px;top:767px;font-weight:bold;color:#000;transform:scaleX(0.9313)">Add It</div>
<div class="t" style="left:641.70px;top:767px;font-weight:bold;color:#000;transform:scaleX(0.9207)">Cancel</div>
</body></html>
